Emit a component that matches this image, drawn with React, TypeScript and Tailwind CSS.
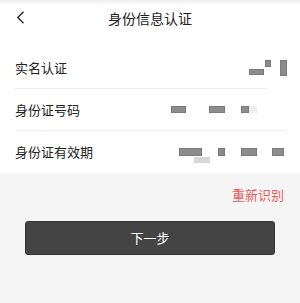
import React from "react";

const font = { fontFamily: '"Noto Sans CJK SC", "Noto Sans", sans-serif' };
const blk = "bg-[#8c8c8c] border border-[#7a7a7a] shrink-0";

export default function App() {
  return (
    <div className="w-[300px] h-[303px] bg-[#f5f5f5] overflow-hidden text-[#222]" style={font}>
      <div className="bg-white">
        <div className="relative h-[35px] flex items-center justify-center bg-gradient-to-b from-[#ededed] to-white to-[14%]">
          <svg className="absolute left-[16px] top-[11px]" width="9" height="13" viewBox="0 0 9 13">
            <path d="M7.5 0.8 L1.8 6.5 L7.5 12.2" fill="none" stroke="#222" strokeWidth="1.3" />
          </svg>
          <span className="text-[14px] leading-none text-[#222]">身份信息认证</span>
        </div>
        <div className="h-[12px]" />
        <div className="pl-[15px] flex flex-col">
          {/* Row 1 */}
          <div className="h-[41px] flex items-center justify-between pr-[13px]">
            <span className="text-[13px]">实名认证</span>
            <div className="flex items-start h-[16px]">
              <div className={`${blk} w-[15px] h-[6px] mt-[9px]`} />
              <div className={`${blk} w-[6px] h-[7px] ml-[1px]`} />
              <div className={`${blk} w-[7px] h-[16px] ml-[9px]`} />
            </div>
          </div>
          <div className="h-px w-[252px] bg-[#f0f0f0]" />
          {/* Row 2 */}
          <div className="h-[41px] flex items-center justify-between pr-[43px]">
            <span className="text-[13px]">身份证号码</span>
            <div className="flex items-center">
              <div className={`${blk} w-[15px] h-[7px]`} />
              <div className={`${blk} w-[16px] h-[7px] ml-[23px]`} />
              <div className={`${blk} w-[8px] h-[7px] ml-[16px]`} />
              <div className="bg-[#eeeeee] w-[8px] h-[7px] shrink-0" />
            </div>
          </div>
          <div className="h-px w-[270px] bg-[#f0f0f0]" />
          {/* Row 3 */}
          <div className="h-[42px] flex items-center justify-between pr-[16px]">
            <span className="text-[13px]">身份证有效期</span>
            <div className="flex items-center">
              <div className={`${blk} relative w-[23px] h-[8px]`}>
                <div className="absolute left-[14px] top-[8px] w-[16px] h-[6px] bg-[#d6d6d6]" />
              </div>
              <div className={`${blk} w-[7px] h-[8px] ml-[16px]`} />
              <div className={`${blk} w-[16px] h-[8px] ml-[16px]`} />
              <div className={`${blk} w-[12px] h-[8px] ml-[15px]`} />
            </div>
          </div>
        </div>
      </div>
      <div className="flex justify-end pr-[16px] pt-[13px]">
        <span className="text-[13px] leading-[18px] text-[#ef5b5b]">重新识别</span>
      </div>
      <div className="px-[25px] pt-[17px]">
        <button className="w-full h-[34px] rounded-[3px] bg-[#444444] border border-[#333] text-white text-[13px] flex items-center justify-center" style={font}>
          下一步
        </button>
      </div>
    </div>
  );
}
